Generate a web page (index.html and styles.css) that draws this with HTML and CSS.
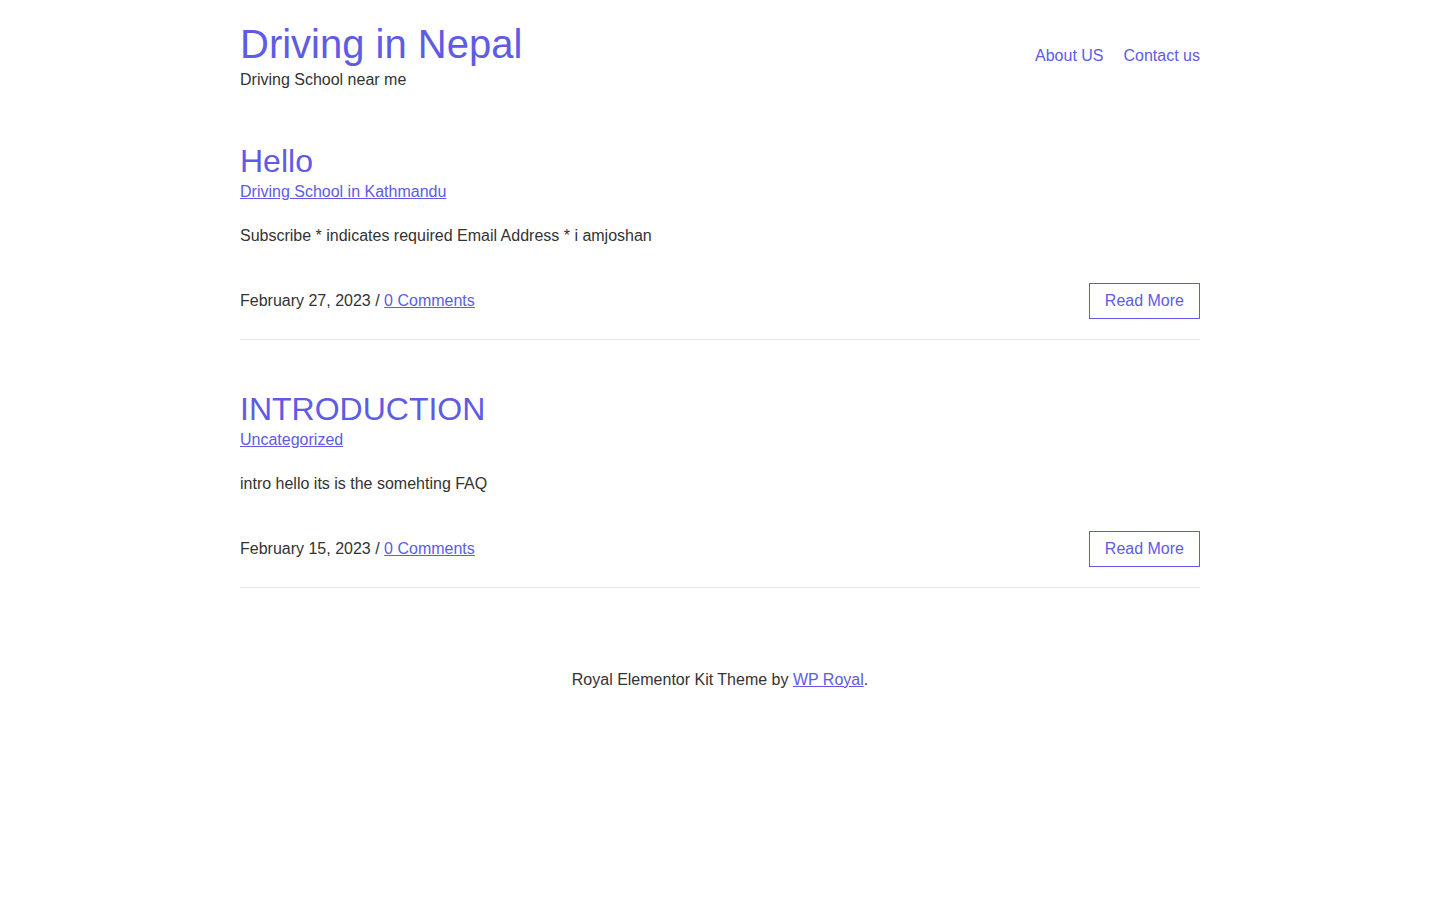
FILE: index.html
```html
<!DOCTYPE html>
<html lang="en">
<head>
<meta charset="utf-8">
<title>Driving in Nepal</title>
<link rel="stylesheet" href="styles.css">
</head>
<body>
<div class="container">
  <header class="site-header">
    <div class="branding">
      <a class="site-title" href="#">Driving in Nepal</a>
      <p class="site-desc">Driving School near me</p>
    </div>
    <nav class="main-nav">
      <a href="#">About US</a>
      <a href="#">Contact us</a>
    </nav>
  </header>

  <main class="posts">
    <article class="post">
      <h2 class="post-title"><a href="#">Hello</a></h2>
      <div class="post-cats"><a href="#">Driving School in Kathmandu</a></div>
      <p class="post-excerpt">Subscribe * indicates required Email Address * i amjoshan</p>
      <div class="post-meta">
        <span class="meta-text">February 27, 2023 / <a href="#">0 Comments</a></span>
        <a class="read-more" href="#">Read More</a>
      </div>
    </article>

    <article class="post">
      <h2 class="post-title"><a href="#">INTRODUCTION</a></h2>
      <div class="post-cats"><a href="#">Uncategorized</a></div>
      <p class="post-excerpt">intro hello its is the somehting FAQ</p>
      <div class="post-meta">
        <span class="meta-text">February 15, 2023 / <a href="#">0 Comments</a></span>
        <a class="read-more" href="#">Read More</a>
      </div>
    </article>
  </main>

  <footer class="site-footer">
    <p>Royal Elementor Kit Theme by <a href="#">WP Royal</a>.</p>
  </footer>
</div>
</body>
</html>
```

FILE: styles.css
```css
html, body {
  margin: 0;
  padding: 0;
  background: #ffffff;
}

body {
  font-family: "Liberation Sans", Arial, sans-serif;
  font-size: 16px;
  line-height: 22px;
  color: #333333;
}

a {
  color: #605be5;
}

.container {
  width: 960px;
  margin: 0 auto;
}

.site-header {
  display: flex;
  justify-content: space-between;
  align-items: center;
  padding-top: 20px;
}

.site-title {
  display: block;
  font-size: 40px;
  line-height: 48px;
  text-decoration: none;
}

.site-desc {
  margin: 1px 0 0;
  line-height: 22px;
}

.main-nav {
  display: flex;
  gap: 20px;
}

.main-nav a {
  text-decoration: none;
}

.posts {
  padding-top: 51px;
}

.post {
  border-bottom: 1px solid #e8e8e8;
  padding-bottom: 20px;
  margin-bottom: 50px;
}

.post-title {
  margin: 0;
  font-size: 32px;
  line-height: 38px;
  font-weight: normal;
}

.post-title a {
  text-decoration: none;
}

.post-cats {
  margin-top: 1px;
  line-height: 22px;
}

.post-excerpt {
  margin: 22px 0 0;
}

.post-meta {
  display: flex;
  justify-content: space-between;
  align-items: center;
  margin-top: 36px;
}

.read-more {
  display: block;
  border: 1px solid #605be5;
  padding: 6px 15px;
  line-height: 22px;
  text-decoration: none;
}

.site-footer {
  text-align: center;
  padding-top: 31px;
}

.site-footer p {
  margin: 0;
}
```
